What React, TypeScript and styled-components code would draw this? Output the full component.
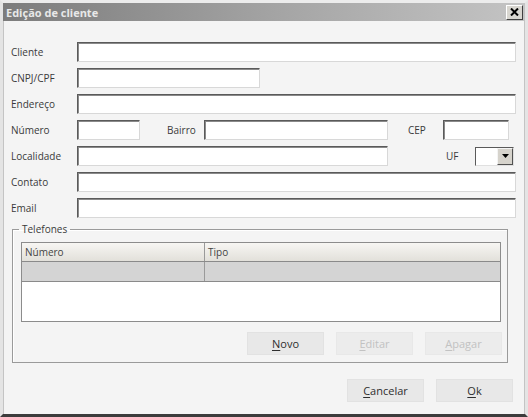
import React from "react";
import styled, { createGlobalStyle } from "styled-components";

const Global = createGlobalStyle`
  html, body { margin: 0; padding: 0; background: #f4f4f4; }
  * { box-sizing: border-box; }
`;

const Frame = styled.div`
  width: 528px;
  height: 417px;
  background: #f4f4f4;
  border-left: 3px solid #e4e4e4;
  border-right: 3px solid #e4e4e4;
  border-top: 3px solid #ececec;
  border-bottom: 3px solid #3c3c3c;
  box-shadow: inset 1px 0 0 #c4c4c4, inset -1px 0 0 #c4c4c4;
  display: flex;
  flex-direction: column;
  font-family: "Open Sans", "DejaVu Sans", sans-serif;
  font-size: 10px;
  color: #3a3a3a;
`;

const TitleBar = styled.div`
  height: 18px;
  display: flex;
  align-items: center;
  justify-content: space-between;
  padding: 0 2px 0 3px;
  background: linear-gradient(to right, #7c7c7c, #a6a6a6 55%, #c4c4c4);
`;

const Title = styled.span`
  font-weight: 700;
  font-size: 11px;
  color: #e8e8e8;
`;

const CloseButton = styled.div`
  width: 17px;
  height: 15px;
  background: #d8d6d0;
  border: 1px solid;
  border-color: #ffffff #404040 #404040 #ffffff;
  display: flex;
  align-items: center;
  justify-content: center;
`;

const Body = styled.div`
  flex: 1;
  display: flex;
  flex-direction: column;
  padding: 21px 0 0 8px;
`;

const Fields = styled.div`
  display: flex;
  flex-direction: column;
  gap: 6px;
`;

const Row = styled.div`
  display: flex;
  align-items: center;
  height: 20px;
`;

const Label = styled.span<{ $w: number }>`
  width: ${(p) => p.$w}px;
  flex: none;
  white-space: nowrap;
`;

const Input = styled.div<{ $w: number }>`
  width: ${(p) => p.$w}px;
  height: 20px;
  flex: none;
  background: #ffffff;
  border: 1px solid;
  border-color: #5a5a5a #d8d8d8 #d8d8d8 #5a5a5a;
  box-shadow: inset 1px 1px 0 #8a8a8a;
`;

const Combo = styled.div`
  width: 39px;
  height: 19px;
  flex: none;
  display: flex;
  background: #ffffff;
  border: 1px solid;
  border-color: #5a5a5a #e0e0e0 #e0e0e0 #5a5a5a;
`;

const ComboField = styled.div`
  flex: 1;
`;

const ComboButton = styled.div`
  width: 16px;
  background: #d6d3cc;
  border: 1px solid;
  border-color: #f4f4f4 #505050 #505050 #f4f4f4;
  display: flex;
  align-items: center;
  justify-content: center;
`;

const Group = styled.fieldset`
  margin: 5px 0 0 1px;
  width: 496px;
  padding: 7px 5px 7px 8px;
  border: 1px solid #9a9a9a;
  box-shadow: inset 1px 1px 0 #ffffff;
`;

const Legend = styled.legend`
  padding: 0 3px;
  margin-left: -2px;
  line-height: 12px;
  font-size: 10px;
  color: #3a3a3a;
`;

const Table = styled.div`
  width: 480px;
  height: 80px;
  background: #ffffff;
  border: 1px solid #8c8c8c;
  display: flex;
  flex-direction: column;
`;

const GridRow = styled.div<{ $header?: boolean }>`
  display: grid;
  grid-template-columns: 182px 1fr;
  height: ${(p) => (p.$header ? 19 : 20)}px;
  background: ${(p) =>
    p.$header ? "linear-gradient(#f7f6f3, #e2e0da)" : "#d4d4d4"};
  border-bottom: 1px solid #8a8a8a;
`;

const Cell = styled.div`
  padding-left: 3px;
  display: flex;
  align-items: center;
  color: #444;
  & + & {
    border-left: 1px solid #9a9a9a;
  }
`;

const ButtonRow = styled.div<{ $pr: number }>`
  display: flex;
  justify-content: flex-end;
  gap: 12px;
  padding-right: ${(p) => p.$pr}px;
`;

const GroupButtons = styled(ButtonRow)`
  margin-top: 10px;
`;

const FooterButtons = styled(ButtonRow)`
  margin-top: 16px;
`;

const Button = styled.div<{ $disabled?: boolean }>`
  width: 77px;
  height: 23px;
  display: flex;
  align-items: center;
  justify-content: center;
  background: ${(p) => (p.$disabled ? "#ececec" : "#e8e8e8")};
  border: 1px solid ${(p) => (p.$disabled ? "#e8e8e8" : "#e2e2e2")};
  color: ${(p) => (p.$disabled ? "#c2c2c2" : "#2e2e2e")};
  font-size: 11px;
  & u {
    text-underline-offset: 2px;
  }
`;

export default function App() {
  return (
    <>
      <Global />
      <Frame>
        <TitleBar>
          <Title>Edição de cliente</Title>
          <CloseButton>
            <svg width="9" height="8" viewBox="0 0 9 8">
              <path d="M1 0.5 L8 7.5 M8 0.5 L1 7.5" stroke="#000" strokeWidth="2" />
            </svg>
          </CloseButton>
        </TitleBar>
        <Body>
          <Fields>
            <Row>
              <Label $w={66}>Cliente</Label>
              <Input $w={439} />
            </Row>
            <Row>
              <Label $w={66}>CNPJ/CPF</Label>
              <Input $w={183} />
            </Row>
            <Row>
              <Label $w={66}>Endereço</Label>
              <Input $w={439} />
            </Row>
            <Row>
              <Label $w={66}>Número</Label>
              <Input $w={63} />
              <Label $w={37} style={{ marginLeft: 27 }}>Bairro</Label>
              <Input $w={184} />
              <Label $w={35} style={{ marginLeft: 20 }}>CEP</Label>
              <Input $w={66} />
            </Row>
            <Row>
              <Label $w={66}>Localidade</Label>
              <Input $w={311} />
              <Label $w={29} style={{ marginLeft: 58 }}>UF</Label>
              <Combo>
                <ComboField />
                <ComboButton>
                  <svg width="7" height="4" viewBox="0 0 7 4">
                    <path d="M0 0 H7 L3.5 4 Z" fill="#000" />
                  </svg>
                </ComboButton>
              </Combo>
            </Row>
            <Row>
              <Label $w={66}>Contato</Label>
              <Input $w={439} />
            </Row>
            <Row>
              <Label $w={66}>Email</Label>
              <Input $w={439} />
            </Row>
          </Fields>
          <Group>
            <Legend>Telefones</Legend>
            <Table>
              <GridRow $header>
                <Cell>Número</Cell>
                <Cell>Tipo</Cell>
              </GridRow>
              <GridRow>
                <Cell />
                <Cell />
              </GridRow>
            </Table>
            <GroupButtons $pr={0}>
              <Button>
                <span><u>N</u>ovo</span>
              </Button>
              <Button $disabled>
                <span><u>E</u>ditar</span>
              </Button>
              <Button $disabled>
                <span><u>A</u>pagar</span>
              </Button>
            </GroupButtons>
          </Group>
          <FooterButtons $pr={12}>
            <Button>
              <span><u>C</u>ancelar</span>
            </Button>
            <Button>
              <span><u>O</u>k</span>
            </Button>
          </FooterButtons>
        </Body>
      </Frame>
    </>
  );
}
